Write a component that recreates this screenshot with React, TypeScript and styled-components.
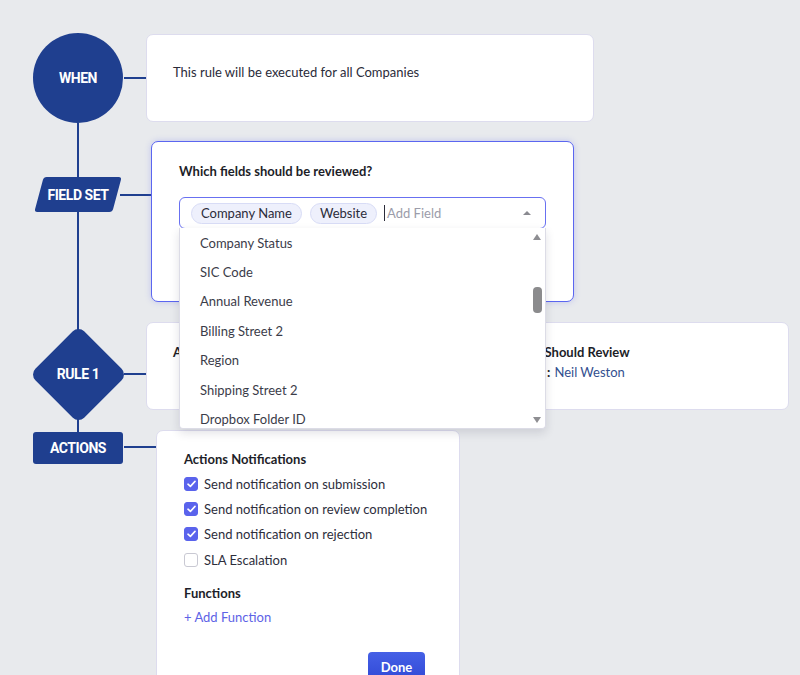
import React from "react";
import styled, { createGlobalStyle } from "styled-components";

const NAVY = "#1f3f8f";
const INDIGO = "#5a63ec";

const GlobalStyle = createGlobalStyle`
  html, body {
    margin: 0;
    padding: 0;
  }
  body {
    background: #e8eaed;
    font-family: Lato, "Liberation Sans", sans-serif;
    color: #2a2b36;
    overflow: hidden;
  }
`;

const Canvas = styled.div`
  box-sizing: border-box;
  height: 675px;
  padding: 34px 0 0 32px;
  overflow: hidden;
`;

const Flow = styled.div`
  position: relative;
  display: flex;
  flex-direction: column;
  gap: 19px;
`;

// the vertical spine joining all nodes
const Rail = styled.div`
  position: absolute;
  left: 45px;
  top: 89px;
  width: 2px;
  height: 310px;
  background: ${NAVY};
`;

const Step = styled.div<{ $raised?: boolean; $gap?: number; $h?: number }>`
  position: relative;
  z-index: ${({ $raised }) => ($raised ? 3 : 1)};
  display: flex;
  align-items: flex-start;
  height: ${({ $h }) => ($h ? `${$h}px` : "auto")};
  margin-top: ${({ $gap }) => $gap ?? 0}px;
`;

const NodeSlot = styled.div<{ $top: number }>`
  flex: none;
  width: 92px;
  display: flex;
  justify-content: center;
  margin-top: ${({ $top }) => $top}px;
`;

const Link = styled.div<{ $top: number; $w: number; $pull?: number }>`
  flex: none;
  width: ${({ $w }) => $w}px;
  height: 2px;
  margin-top: ${({ $top }) => $top}px;
  margin-left: ${({ $pull }) => -($pull ?? 0)}px;
  background: ${NAVY};
`;

const NodeLabel = styled.span`
  position: relative;
  color: #fff;
  font-family: Roboto, "Liberation Sans", sans-serif;
  font-weight: 700;
  font-size: 14px;
  letter-spacing: -0.45px;
`;

const Circle = styled.div`
  width: 90px;
  height: 90px;
  border-radius: 50%;
  background: ${NAVY};
  display: flex;
  align-items: center;
  justify-content: center;
`;

const Parallelogram = styled.div`
  position: relative;
  width: 88px;
  height: 35px;
  display: flex;
  align-items: center;
  justify-content: center;

  &::before {
    content: "";
    position: absolute;
    inset: 0 5px;
    background: ${NAVY};
    border-radius: 3px;
    transform: skewX(-15deg);
  }
`;

const Diamond = styled.div`
  position: relative;
  width: 96px;
  height: 96px;
  display: flex;
  align-items: center;
  justify-content: center;

  &::before {
    content: "";
    position: absolute;
    width: 69px;
    height: 69px;
    background: ${NAVY};
    border-radius: 8px;
    transform: rotate(45deg);
  }
`;

const Block = styled.div`
  width: 90px;
  height: 32px;
  border-radius: 3px;
  background: ${NAVY};
  display: flex;
  align-items: center;
  justify-content: center;
`;

const Card = styled.div<{ $w: number; $h?: number; $active?: boolean }>`
  box-sizing: border-box;
  flex: none;
  width: ${({ $w }) => $w}px;
  height: ${({ $h }) => ($h ? `${$h}px` : "auto")};
  background: #fff;
  border-radius: 7px;
  border: 1px solid ${({ $active }) => ($active ? "#5b66f0" : "#dddcee")};
  box-shadow: ${({ $active }) =>
    $active ? "0 0 6px rgba(91, 102, 240, 0.28)" : "none"};
  font-size: 13px;
`;

const Plain = styled.p`
  margin: 0;
  padding: 29px 0 0 26px;
  line-height: 16px;
  color: #2a2b39;
`;

const FieldBody = styled.div`
  padding: 20px 27px 0 27px;
`;

const Heading = styled.div`
  font-weight: 700;
  font-size: 13px;
  line-height: 18px;
  color: #1d1e28;
`;

const Select = styled.div`
  position: relative;
  margin-top: 17px;
  box-sizing: border-box;
  height: 32px;
  display: flex;
  align-items: center;
  gap: 8px;
  padding: 0 14px 0 11px;
  border: 1px solid #6870f1;
  border-radius: 6px;
`;

const Pill = styled.span`
  box-sizing: border-box;
  height: 21px;
  padding: 0 9px;
  display: inline-flex;
  align-items: center;
  border-radius: 11px;
  background: #eef0fc;
  border: 1px solid #d8dcf6;
  color: #2b2c3a;
  font-size: 13px;
`;

const Placeholder = styled.span`
  flex: 1;
  margin-left: -1px;
  padding-left: 2px;
  border-left: 1px solid #2b2c3a;
  line-height: 16px;
  color: #9b9caa;
`;

const Caret = styled.span<{ $down?: boolean }>`
  width: 0;
  height: 0;
  border-left: 4.5px solid transparent;
  border-right: 4.5px solid transparent;
  ${({ $down }) =>
    $down ? "border-top: 6px solid #8e8e92;" : "border-bottom: 6px solid #8e8e92;"}
`;

const SelectCaret = styled(Caret)`
  border-left-width: 4px;
  border-right-width: 4px;
  border-bottom-width: 4px;
  border-bottom-color: #8a8a90;
`;

// options menu hanging under the field picker
const Menu = styled.div`
  position: absolute;
  top: 100%;
  left: -1px;
  right: -1px;
  height: 200px;
  display: flex;
  background: #fff;
  border: 1px solid #dcdce6;
  border-top: none;
  border-radius: 0 0 4px 4px;
  box-shadow: 0 4px 10px rgba(40, 40, 70, 0.14);
  overflow: hidden;
`;

const Options = styled.ul`
  flex: 1;
  margin: 0;
  padding: 0;
  list-style: none;
  overflow: hidden;
`;

const Option = styled.li`
  height: 29.4px;
  display: flex;
  align-items: center;
  padding-left: 20px;
  font-size: 13px;
  color: #3b3c49;
`;

const Scrollbar = styled.div`
  flex: none;
  width: 14px;
  display: flex;
  flex-direction: column;
  align-items: center;
  padding: 6px 1px 5px 0;
`;

const Track = styled.div`
  flex: 1;
  width: 9px;
  padding-top: 47px;
`;

const Thumb = styled.div`
  width: 9px;
  height: 26px;
  border-radius: 4px;
  background: #8b8b8d;
`;

const Columns = styled.div`
  display: grid;
  grid-template-columns: 340px 1fr;
  padding: 19px 0 0 26px;
  line-height: 20px;
`;

const Strong = styled.div`
  font-weight: 700;
  color: #1d1e28;
`;

const Muted = styled.div`
  color: #2d2e3c;
`;

const Colon = styled.span`
  margin: 0 4px 0 2px;
  font-weight: 700;
  color: #1d1e28;
`;

const Accent = styled.span`
  color: #33508f;
`;

const ActionsBody = styled.div`
  padding: 19px 28px 30px 27px;
`;

const CheckRow = styled.label`
  height: 25.3px;
  display: flex;
  align-items: center;
  gap: 6px;
  font-size: 13px;
  color: #2d2e3c;
  &:first-of-type {
    margin-top: 3px;
  }
`;

const Box = styled.span<{ $on: boolean }>`
  box-sizing: border-box;
  width: 14px;
  height: 14px;
  border-radius: 3px;
  display: flex;
  align-items: center;
  justify-content: center;
  background: ${({ $on }) => ($on ? INDIGO : "#fff")};
  border: 1px solid ${({ $on }) => ($on ? INDIGO : "#c9c9d3")};
`;

const SubHeading = styled(Heading)`
  margin-top: 12px;
`;

const AddLink = styled.a`
  display: block;
  margin-top: 6px;
  line-height: 18px;
  font-size: 13px;
  color: #5d63e6;
  text-decoration: none;
`;

const Footer = styled.div`
  display: flex;
  justify-content: flex-end;
  margin-top: 26px;
  padding-right: 6px;
`;

const Done = styled.button`
  width: 57px;
  height: 29px;
  border: none;
  border-radius: 4px;
  background: linear-gradient(#4560e6, #3149d6);
  color: #fff;
  font-family: Lato, "Liberation Sans", sans-serif;
  font-weight: 700;
  font-size: 13px;
`;

const Tick = () => (
  <svg width="9" height="8" viewBox="0 0 9 8">
    <path d="M1 4.2 3.4 6.4 8 1.4" fill="none" stroke="#fff" strokeWidth="1.6" strokeLinecap="round" strokeLinejoin="round" />
  </svg>
);

const fields = [
  "Company Status",
  "SIC Code",
  "Annual Revenue",
  "Billing Street 2",
  "Region",
  "Shipping Street 2",
  "Dropbox Folder ID",
];

const notifications = [
  { label: "Send notification on submission", on: true },
  { label: "Send notification on review completion", on: true },
  { label: "Send notification on rejection", on: true },
  { label: "SLA Escalation", on: false },
];

export default function App() {
  return (
    <>
      <GlobalStyle />
      <Canvas>
        <Flow>
          <Rail />

          <Step $h={88}>
            <NodeSlot $top={-1}>
              <Circle>
                <NodeLabel>WHEN</NodeLabel>
              </Circle>
            </NodeSlot>
            <Link $top={43} $w={22} />
            <Card $w={448} $h={88}>
              <Plain>This rule will be executed for all Companies</Plain>
            </Card>
          </Step>

          <Step $raised $h={161}>
            <NodeSlot $top={36}>
              <Parallelogram>
                <NodeLabel>FIELD SET</NodeLabel>
              </Parallelogram>
            </NodeSlot>
            <Link $top={53} $w={31} $pull={4} />
            <Card $w={423} $h={161} $active>
              <FieldBody>
                <Heading>Which fields should be reviewed?</Heading>
                <Select>
                  <Pill>Company Name</Pill>
                  <Pill>Website</Pill>
                  <Placeholder>Add Field</Placeholder>
                  <SelectCaret />
                  <Menu>
                    <Options>
                      {fields.map((f) => (
                        <Option key={f}>{f}</Option>
                      ))}
                    </Options>
                    <Scrollbar>
                      <Caret />
                      <Track>
                        <Thumb />
                      </Track>
                      <Caret $down />
                    </Scrollbar>
                  </Menu>
                </Select>
              </FieldBody>
            </Card>
          </Step>

          <Step $gap={1} $h={88}>
            <NodeSlot $top={4}>
              <Diamond>
                <NodeLabel>RULE 1</NodeLabel>
              </Diamond>
            </NodeSlot>
            <Link $top={51} $w={22} />
            <Card $w={643} $h={88}>
              <Columns>
                <div>
                  <Strong>Approval Criteria</Strong>
                </div>
                <div>
                  <Strong>Who Should Review</Strong>
                  <Muted>
                    Users<Colon>:</Colon>
                    <Accent>Neil Weston</Accent>
                  </Muted>
                </div>
              </Columns>
            </Card>
          </Step>

          <Step $gap={1}>
            <NodeSlot $top={2}>
              <Block>
                <NodeLabel>ACTIONS</NodeLabel>
              </Block>
            </NodeSlot>
            <Link $top={16} $w={32} />
            <Card $w={304}>
              <ActionsBody>
                <Heading>Actions Notifications</Heading>
                {notifications.map((n) => (
                  <CheckRow key={n.label}>
                    <Box $on={n.on}>{n.on && <Tick />}</Box>
                    {n.label}
                  </CheckRow>
                ))}
                <SubHeading>Functions</SubHeading>
                <AddLink>+ Add Function</AddLink>
                <Footer>
                  <Done>Done</Done>
                </Footer>
              </ActionsBody>
            </Card>
          </Step>
        </Flow>
      </Canvas>
    </>
  );
}
